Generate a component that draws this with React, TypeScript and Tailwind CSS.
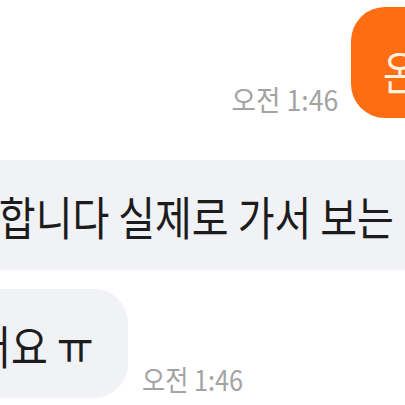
export default function App() {
  return (
    <div
      className="w-[405px] h-[405px] overflow-hidden bg-white flex flex-col"
      style={{ fontFamily: '"Noto Sans CJK KR", "Noto Sans", sans-serif' }}
    >
      {/* sent message */}
      <div className="flex justify-end items-end gap-[13px] pt-[7px] mr-[-80px]">
        <span className="inline-block origin-right scale-x-[0.95] text-[28px] leading-none text-[#a3a3a3] mb-[5px] whitespace-nowrap">
          오전 1:46
        </span>
        <div className="w-[134px] h-[111px] rounded-[34px] bg-[#ff6d12] flex items-center pl-[32px] pt-[14px] shrink-0">
          <span className="inline-block origin-left scale-x-[0.8] text-[46px] leading-none text-[#fff1dc] whitespace-nowrap">
            온
          </span>
        </div>
      </div>

      {/* received message */}
      <div className="mt-[42px] ml-[-40px] h-[110px] w-[520px] bg-[#f1f2f5] rounded-[34px] flex items-center pl-[2px] shrink-0">
        <span className="inline-block origin-left scale-x-[0.87] text-[46px] leading-none text-[#1c1c1c] whitespace-nowrap">
          능합니다 실제로 가서 보는
        </span>
      </div>

      <div className="flex items-end gap-[14px] mt-[19px] ml-[-60px]">
        <div className="w-[188px] h-[109px] bg-[#f1f2f5] rounded-[34px] flex items-center justify-end pr-[34px] shrink-0">
          <span className="inline-block origin-right scale-x-[0.87] text-[46px] leading-none text-[#1c1c1c] whitespace-nowrap">
            있어요 ㅠ
          </span>
        </div>
        <span className="inline-block origin-left scale-x-[0.9] text-[28px] leading-none text-[#a3a3a3] mb-[5px] whitespace-nowrap">
          오전 1:46
        </span>
      </div>
    </div>
  )
}
